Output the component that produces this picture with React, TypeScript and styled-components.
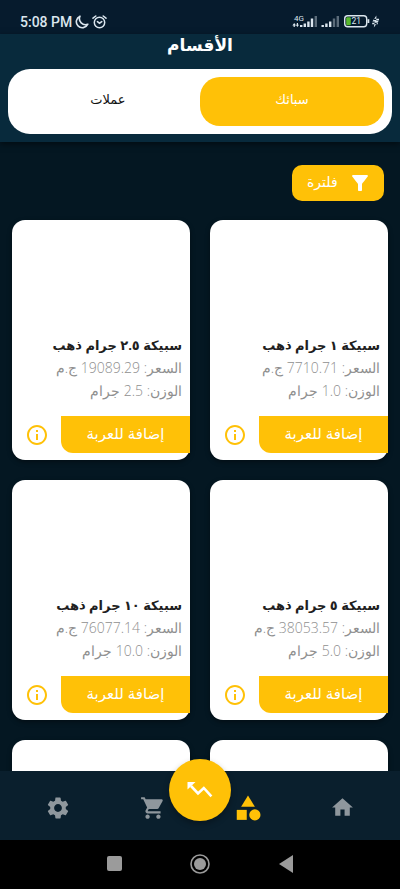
import React from "react";
import styled, { createGlobalStyle, css } from "styled-components";
import { MdSettings, MdShoppingCart, MdHome, MdCategory, MdFilterAlt, MdInfoOutline } from "react-icons/md";

const gold = "#ffc107";

const GlobalStyle = createGlobalStyle`
  *, *::before, *::after { box-sizing: border-box; }
  body { margin: 0; background: #041722; }
  button { font: inherit; border: 0; margin: 0; padding: 0; cursor: pointer; background: none; color: inherit; }
  svg { display: block; flex: none; }
`;

const Screen = styled.div`
  display: flex;
  flex-direction: column;
  height: 100vh;
  overflow: hidden;
  background: #041722;
  font-family: "Open Sans", "DejaVu Sans", sans-serif;
`;

const StatusBar = styled.div`
  display: flex;
  align-items: center;
  justify-content: space-between;
  flex: none;
  height: 34px;
  padding: 9px 20px 0;
  background: #061b2d;
  color: #dbe6ee;
  font: 500 14px/24px Roboto, sans-serif;
`;

const StatusGroup = styled.div`
  display: flex;
  align-items: center;
  gap: 3px;
`;

const Header = styled.header`
  flex: none;
  padding: 0 8px 8px;
  background: #082a3c;
  box-shadow: 0 2px 6px rgba(0, 0, 0, 0.5);
`;

const Title = styled.h1`
  margin: 0;
  height: 35px;
  color: #fff;
  text-align: center;
  font-size: 17px;
  font-weight: 700;
  line-height: 22px;
`;

const Tabs = styled.div`
  display: flex;
  padding: 8px;
  border-radius: 22px;
  background: #fff;
`;

const Tab = styled.button<{ $active?: boolean }>`
  flex: 1;
  height: 49px;
  padding-bottom: 6px;
  border-radius: 20px;
  font-size: 13px;
  color: ${(p) => (p.$active ? "#fff" : "#111")};
  background: ${(p) => (p.$active ? gold : "transparent")};
`;

const Content = styled.main`
  flex: 1;
  min-height: 0;
  overflow: hidden;
  padding: 23px 12px 0;
`;

const FilterButton = styled.button`
  display: flex;
  align-items: center;
  justify-content: space-between;
  width: 92px;
  height: 36px;
  margin-inline-start: 4px;
  padding: 0 12px 0 15px;
  border-radius: 10px;
  background: ${gold};
  color: #fff;
  font-size: 14px;
`;

const FilterLabel = styled.span`
  padding-bottom: 4px;
`;

const Grid = styled.div`
  display: grid;
  grid-template-columns: 1fr 1fr;
  gap: 20px;
  margin-top: 19px;
`;

const Card = styled.article`
  display: flex;
  flex-direction: column;
  height: 240px;
  padding-bottom: 7px;
  border-radius: 13px;
  background: #fff;
  box-shadow: 0 2px 5px rgba(0, 0, 0, 0.4);
`;

const Photo = styled.div`
  flex: 1;
`;

const Details = styled.div`
  padding: 0 8px;
  margin-bottom: 14px;
`;

const line = css`
  margin: 0;
  white-space: nowrap;
`;

const Name = styled.h2`
  ${line}
  color: #202020;
  font-size: 13px;
  font-weight: 700;
  line-height: 22px;
`;

const Fact = styled.p`
  ${line}
  color: #8f8f8f;
  font-size: 14px;
  font-weight: 300;
  line-height: 23px;
`;

const CardActions = styled.div`
  display: flex;
  align-items: center;
  height: 37px;
`;

const AddButton = styled.button`
  flex: 1;
  height: 100%;
  padding-bottom: 4px;
  border-radius: 0 0 0 12px;
  background: ${gold};
  color: #fff;
  font-size: 15px;
`;

const InfoButton = styled.button`
  display: grid;
  place-items: center;
  width: 49px;
  height: 100%;
  color: ${gold};
`;

const NavBar = styled.nav`
  display: grid;
  grid-template-columns: repeat(4, 1fr);
  align-items: center;
  flex: none;
  position: relative;
  height: 69px;
  padding: 4px 10px 0;
  background: #0a1f2d;
`;

const NavItem = styled.button<{ $active?: boolean }>`
  display: grid;
  place-items: center;
  height: 48px;
  color: ${(p) => (p.$active ? gold : "#8f979d")};
`;

const Fab = styled.button`
  position: absolute;
  top: -12px;
  left: 50%;
  margin-left: -31px;
  display: grid;
  place-items: center;
  width: 62px;
  height: 62px;
  border-radius: 50%;
  background: ${gold};
  box-shadow: 0 3px 6px rgba(0, 0, 0, 0.3);
`;

const SystemBar = styled.div`
  display: flex;
  align-items: center;
  justify-content: center;
  gap: 66px;
  flex: none;
  height: 49px;
  padding-bottom: 2px;
  background: #000;
  color: #9b9b9b;
`;

const SystemButton = styled.button`
  display: grid;
  place-items: center;
  width: 20px;
  height: 24px;
`;

const products = [
  { name: "سبيكة ١ جرام ذهب", price: "7710.71", weight: "1.0" },
  { name: "سبيكة ٢.٥ جرام ذهب", price: "19089.29", weight: "2.5" },
  { name: "سبيكة ٥ جرام ذهب", price: "38053.57", weight: "5.0" },
  { name: "سبيكة ١٠ جرام ذهب", price: "76077.14", weight: "10.0" },
];

const MoonIcon = () => (
  <svg width="14" height="14" viewBox="0 0 14 14" fill="none" stroke="currentColor" strokeWidth="1.6" strokeLinejoin="round">
    <path d="M5 1.2A6 6 0 1 0 12.8 9.2A6 6 0 0 1 5 1.2Z" />
  </svg>
);

const AlarmIcon = () => (
  <svg width="15" height="14" viewBox="0 0 15 14" fill="none" stroke="currentColor" strokeWidth="1.5" strokeLinecap="round">
    <circle cx="7.5" cy="7.5" r="5.2" />
    <path d="M1 3.2L3.8 1M14 3.2L11.2 1M5.4 6.6L7.5 8.2L9.8 6.6" />
  </svg>
);

const SignalIcons = () => (
  <svg width="88" height="16" viewBox="0 0 88 16" fill="currentColor" fontFamily="Roboto, sans-serif">
    <text x="2" y="7" fontSize="8" fontWeight="400">4G</text>
    <path d="M2.2 9L4 11.5H2.8V13H1.6V11.5H.4ZM5.4 13L3.8 10.8H4.8V9H6V10.8H7Z" />
    <path d="M8 11h2.4v2H8zM11.6 9.5H14V13h-2.4zM15.2 7.5h2.4V13h-2.4zM18.8 4.5h2.4V13h-2.4z" />
    <path d="M22.6 2H25v11h-2.4z" opacity=".4" />
    <path d="M29.5 11h2.4v2h-2.4zM33.2 9.5h2.4V13h-2.4zM37 7.5h2.4V13H37z" />
    <path d="M40.8 4.5h2.4V13h-2.4zM44.6 2H47v11h-2.4z" opacity=".4" />
    <rect x="52.7" y="1.7" width="22" height="11" rx="3" fill="none" stroke="currentColor" strokeWidth="1.4" />
    <rect x="54.2" y="3.2" width="4.6" height="8" rx="1" fill="#58b82e" />
    <path d="M75.5 5.2h1.8v3.8h-1.8z" />
    <text x="59.5" y="10.3" fontSize="8.5" fontWeight="400">21</text>
    <path d="M84.4 1.5L80.4 7.4H82.8L81.8 13.4L87 6.6H84.2ZM80.2 8.8h5.6v1.4h-5.6zM82 4.8h5v1.3h-5z" />
  </svg>
);

const TrendIcon = () => (
  <svg width="26" height="18" viewBox="0 0 26 18" fill="none" stroke="#fff" strokeWidth="2.6">
    <path d="M4 5L11 12.4L16.8 7L24.4 15.4" />
    <path d="M.5 1H8.5L.5 8.5Z" fill="#fff" stroke="none" />
  </svg>
);

export default function App() {
  return (
    <Screen>
      <GlobalStyle />
      <StatusBar>
        <StatusGroup>
          <span>5:08 PM</span>
          <MoonIcon />
          <AlarmIcon />
        </StatusGroup>
        <SignalIcons />
      </StatusBar>
      <Header dir="rtl" lang="ar">
        <Title>الأقسام</Title>
        <Tabs role="tablist">
          <Tab $active role="tab" aria-selected="true">سبائك</Tab>
          <Tab role="tab" aria-selected="false">عملات</Tab>
        </Tabs>
      </Header>
      <Content dir="rtl" lang="ar">
        <FilterButton>
          <MdFilterAlt size={24} />
          <FilterLabel>فلترة</FilterLabel>
        </FilterButton>
        <Grid>
          {products.map((p) => (
            <Card key={p.name}>
              <Photo />
              <Details>
                <Name>{p.name}</Name>
                <Fact>السعر: {p.price} ج.م</Fact>
                <Fact>الوزن: {p.weight} جرام</Fact>
              </Details>
              <CardActions>
                <AddButton>إضافة للعربة</AddButton>
                <InfoButton aria-label="معلومات">
                  <MdInfoOutline size={24} />
                </InfoButton>
              </CardActions>
            </Card>
          ))}
          <Card />
          <Card />
        </Grid>
      </Content>
      <NavBar dir="rtl" lang="ar">
        <NavItem aria-label="الرئيسية"><MdHome size={25} /></NavItem>
        <NavItem $active aria-label="الأقسام"><MdCategory size={30} /></NavItem>
        <Fab aria-label="الأسعار"><TrendIcon /></Fab>
        <NavItem aria-label="العربة"><MdShoppingCart size={26} /></NavItem>
        <NavItem aria-label="الإعدادات"><MdSettings size={26} /></NavItem>
      </NavBar>
      <SystemBar>
        <SystemButton aria-label="Recent apps">
          <svg width="15" height="15" viewBox="0 0 15 15"><rect width="15" height="15" rx="2" fill="currentColor" /></svg>
        </SystemButton>
        <SystemButton aria-label="Home">
          <svg width="20" height="20" viewBox="0 0 20 20">
            <circle cx="10" cy="10" r="9" fill="none" stroke="currentColor" strokeWidth="1.6" />
            <circle cx="10" cy="10" r="6" fill="currentColor" />
          </svg>
        </SystemButton>
        <SystemButton aria-label="Back">
          <svg width="14" height="18" viewBox="0 0 14 18"><path d="M0 9L14 0V18Z" fill="currentColor" /></svg>
        </SystemButton>
      </SystemBar>
    </Screen>
  );
}
